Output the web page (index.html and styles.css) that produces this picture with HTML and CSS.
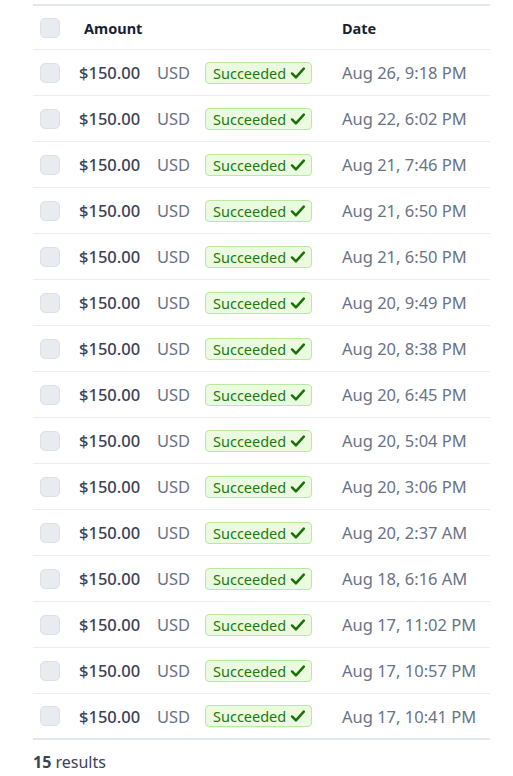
FILE: index.html
```html
<!DOCTYPE html>
<html>
<head>
<meta charset="utf-8">
<link rel="stylesheet" href="styles.css">
</head>
<body>
<div class="wrap">
  <div class="table">
    <div class="row head">
      <div class="c-check"><span class="box"></span></div>
      <div class="c-amount h">Amount</div>
      <div class="c-cur"></div>
      <div class="c-status"></div>
      <div class="c-date h">Date</div>
    </div>
    <div id="rows"></div>
  </div>
  <div class="results"><b>15</b> results</div>
</div>
<script src="app.js"></script>
</body>
</html>
```

FILE: app.js
```js
const dates = ["Aug 26, 9:18 PM","Aug 22, 6:02 PM","Aug 21, 7:46 PM","Aug 21, 6:50 PM","Aug 21, 6:50 PM","Aug 20, 9:49 PM","Aug 20, 8:38 PM","Aug 20, 6:45 PM","Aug 20, 5:04 PM","Aug 20, 3:06 PM","Aug 20, 2:37 AM","Aug 18, 6:16 AM","Aug 17, 11:02 PM","Aug 17, 10:57 PM","Aug 17, 10:41 PM"];
const host = document.getElementById('rows');
host.innerHTML = dates.map(d => `
<div class="row">
  <div class="c-check"><span class="box"></span></div>
  <div class="c-amount amt">$150.00</div>
  <div class="c-cur">USD</div>
  <div class="c-status"><span class="badge">Succeeded<svg width="16" height="14" viewBox="0 0 16 14"><path d="M2 7.5 L6 11.5 L14 2.5" fill="none" stroke="#1a7006" stroke-width="2.5" stroke-linecap="round" stroke-linejoin="round"/></svg></span></div>
  <div class="c-date">${d}</div>
</div>`).join('');
```

FILE: styles.css
```css
html, body { margin: 0; padding: 0; background: #fff; }
body { font-family: "Noto Sans", "Open Sans", sans-serif; color: #3c4257; }
.wrap { padding: 4px 0 0 33px; width: 457px; }
.table { border-top: 2px solid #e3e8ee; border-bottom: 2px solid #e3e8ee; }
.row { display: flex; align-items: center; height: 45px; border-bottom: 1px solid #ebeef1; }
.row.head { height: 43px; }
#rows .row:last-child { border-bottom: none; height: 44px; }
.c-check { width: 46px; padding-left: 7px; box-sizing: border-box; display: flex; align-items: center; }
.box { width: 18px; height: 18px; border: 1px solid #dde1e7; background: #e8ebef; border-radius: 5px; }
.c-amount { width: 78px; }
.c-cur { width: 48px; font-size: 16.5px; color: #697386; }
.c-status { width: 137px; }
.c-date { font-size: 16.5px; color: #697386; }
.h { font-size: 14.5px; font-weight: 700; color: #1a1f36; }
.c-amount.h { padding-left: 5px; box-sizing: border-box; }
.amt { font-size: 16.5px; font-weight: 500; color: #3c4257; }
.badge { display: inline-flex; align-items: center; gap: 4px; height: 22px; box-sizing: border-box; padding: 0 5px 0 7px; width: 107px; border: 1px solid #b7ec9c; background: #eafbe0; border-radius: 4px; color: #217a0d; font-size: 14.5px; }
.results { margin-top: 11px; font-size: 16px; color: #3c4257; }
.results b { font-weight: 700; }
```
